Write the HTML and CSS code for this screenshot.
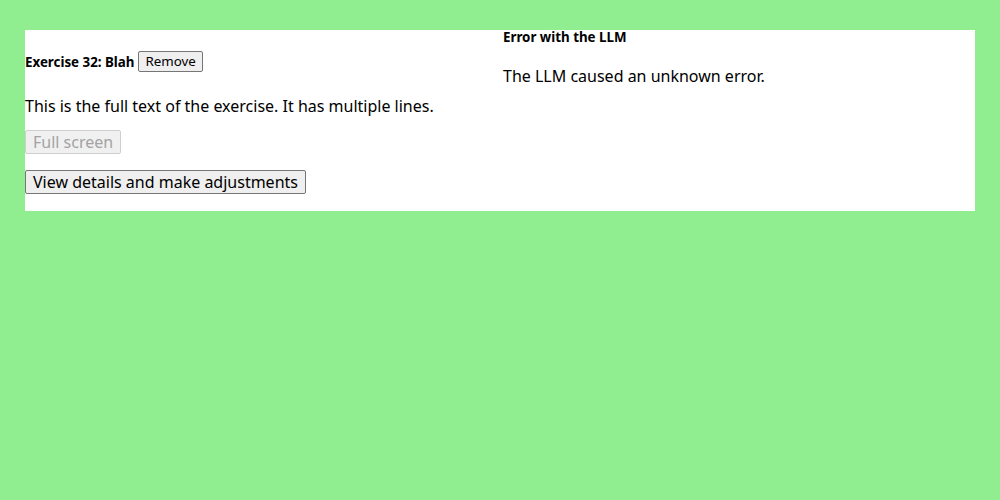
FILE: index.html
```html
<!DOCTYPE html>
<html>
<head>
<meta charset="utf-8">
<link rel="stylesheet" href="styles.css">
</head>
<body>
<div class="panel">
  <div class="col">
    <div class="ex-head">
      <h4 class="ex-title">Exercise 32: Blah</h4>
      <button class="btn-small">Remove</button>
    </div>
    <p class="ex-text">This is the full text of the exercise. It has multiple lines.</p>
    <div class="actions">
      <button class="btn" disabled>Full screen</button>
      <button class="btn">View details and make adjustments</button>
    </div>
  </div>
  <div class="col col-right">
    <h4 class="err-title">Error with the LLM</h4>
    <p class="err-text">The LLM caused an unknown error.</p>
  </div>
</div>
</body>
</html>
```
FILE: styles.css
```css
html, body {
  margin: 0;
  padding: 0;
  background: #90ee90;
  font-family: "Noto Sans", sans-serif;
  color: #000;
}
body {
  padding: 30px 25px;
}
.panel {
  background: #fff;
  display: grid;
  grid-template-columns: 478px 1fr;
}
.ex-head {
  display: flex;
  align-items: center;
  gap: 4px;
  margin-top: 21px;
  height: 21px;
}
.ex-title, .err-title {
  font-size: 13.33px;
  font-weight: bold;
  margin: 0;
  line-height: 14px;
}
.btn-small {
  font-family: "Noto Sans", sans-serif;
  font-size: 13.33px;
  padding: 0 6px;
  height: 21px;
  line-height: 17px;
  border: 1px solid #767676;
  border-radius: 2px;
  background: #efefef;
  color: #000;
}
.ex-text {
  font-size: 16px;
  line-height: 22px;
  margin: 23px 0 13px;
}
.actions {
  display: flex;
  flex-direction: column;
  align-items: flex-start;
  gap: 16px;
  padding-bottom: 17px;
}
.btn {
  font-family: "Noto Sans", sans-serif;
  font-size: 16px;
  height: 24px;
  line-height: 20px;
  padding: 0 7px;
  border: 1px solid #767676;
  border-radius: 2px;
  background: #efefef;
  color: #000;
}
.btn:disabled {
  color: #a3a3a3;
  border-color: #cfcfcf;
  background: #f0f0f0;
}
.err-text {
  font-size: 16px;
  line-height: 22px;
  margin: 21px 0 0;
}
```
